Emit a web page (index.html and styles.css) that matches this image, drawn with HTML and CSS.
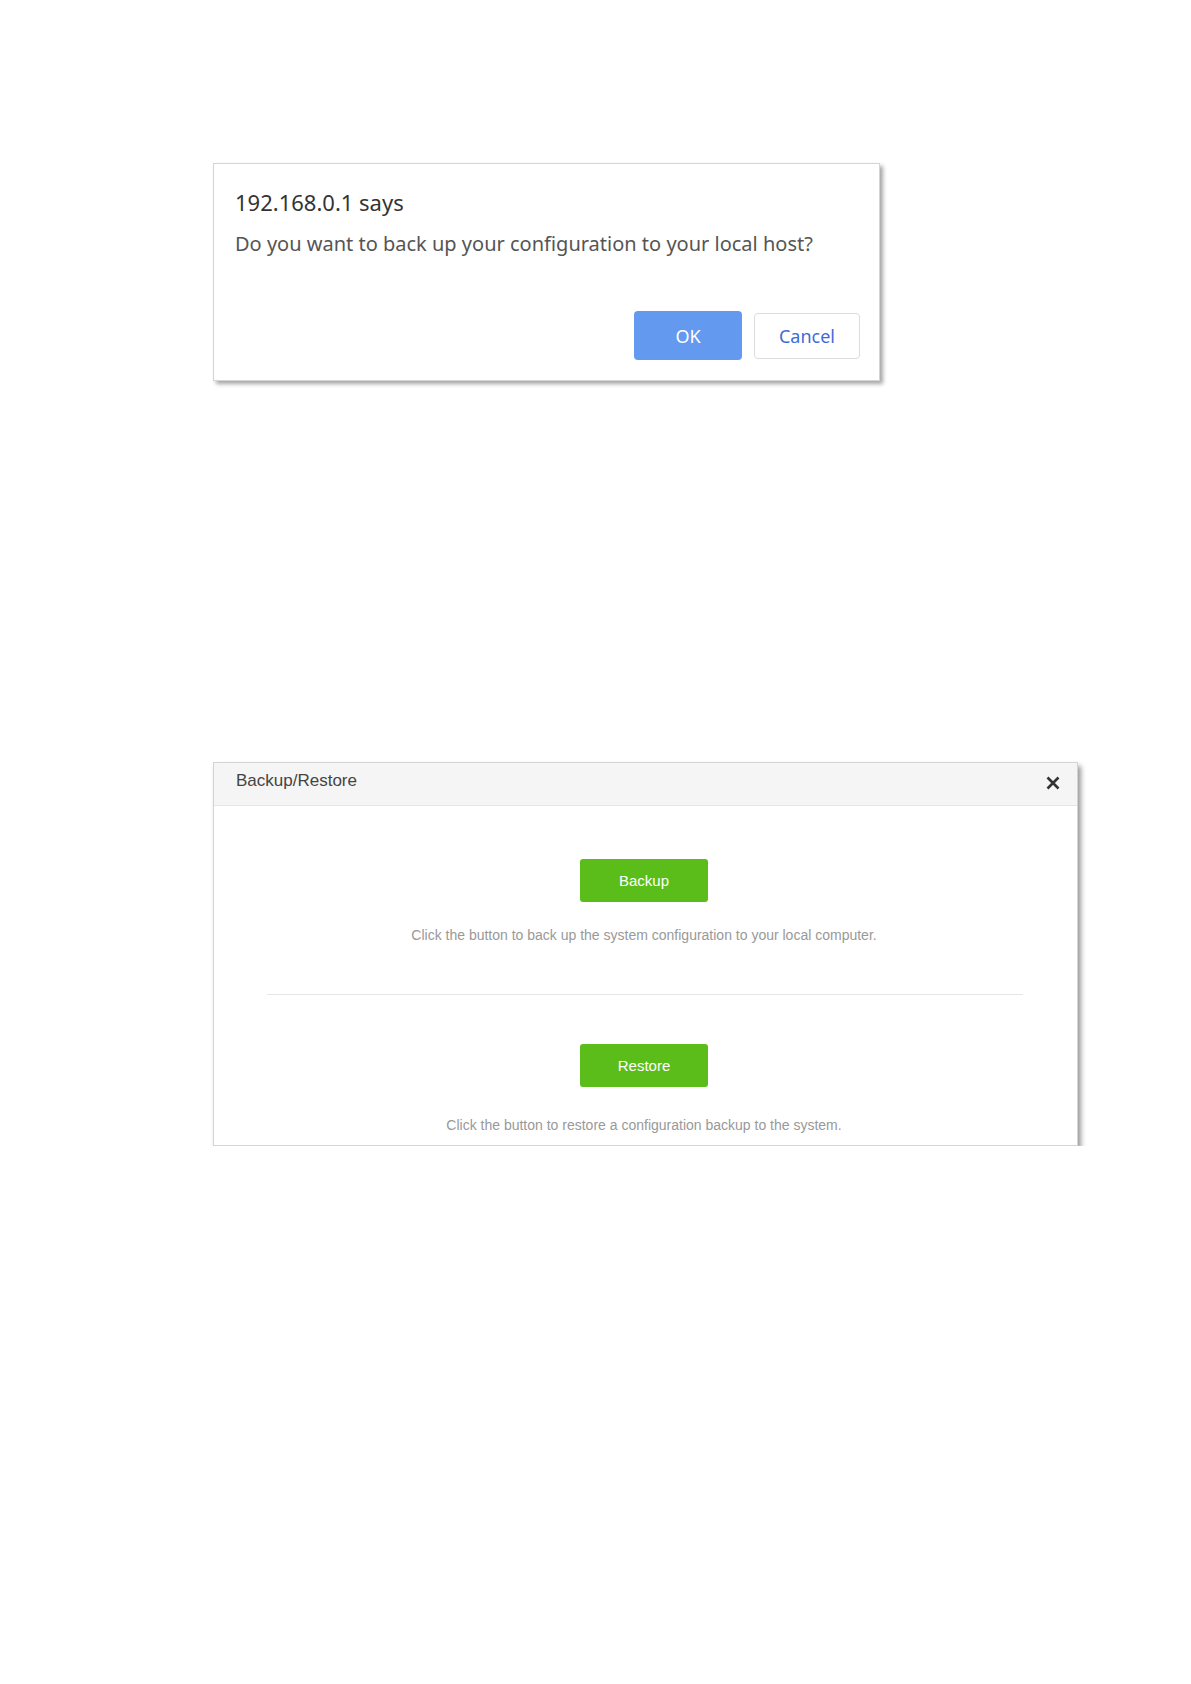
FILE: index.html
```html
<!DOCTYPE html>
<html lang="en">
<head>
    <meta charset="UTF-8">
    <meta name="viewport" content="width=device-width, initial-scale=1.0">
    <title>Backup/Restore</title>
    <link rel="stylesheet" href="styles.css">
</head>
<body>
    <div class="page">
        <div class="alert">
            <div class="alert-title">192.168.0.1 says</div>
            <div class="alert-message">Do you want to back up your configuration to your local host?</div>
            <div class="alert-buttons">
                <button class="btn-ok">OK</button>
                <button class="btn-cancel">Cancel</button>
            </div>
        </div>

        <div class="dialog">
            <div class="dialog-head">
                <span class="dialog-title">Backup/Restore</span>
                <svg class="dialog-close" width="14" height="14" viewBox="0 0 14 14">
                    <path d="M1.5 1.5 L12.5 12.5 M12.5 1.5 L1.5 12.5" stroke="#333" stroke-width="2.6" stroke-linecap="butt" fill="none"/>
                </svg>
            </div>
            <div class="dialog-body">
                <button class="btn-green">Backup</button>
                <p class="tip">Click the button to back up the system configuration to your local computer.</p>
                <hr class="divider">
                <button class="btn-green">Restore</button>
                <p class="tip tip-last">Click the button to restore a configuration backup to the system.</p>
            </div>
        </div>
    </div>
</body>
</html>
```

FILE: styles.css
```css
body {
    margin: 0;
    background-color: #fff;
    font-family: 'Liberation Sans', Arial, sans-serif;
}

.page {
    padding: 163px 0 0 213px;
    display: flex;
    flex-direction: column;
    align-items: flex-start;
}

.alert {
    width: 667px;
    height: 218px;
    box-sizing: border-box;
    border: 1px solid #d4d4d4;
    box-shadow: 3px 3px 4px rgba(0, 0, 0, 0.35);
    background-color: #fff;
    font-family: 'Noto Sans', 'Open Sans', sans-serif;
    padding: 0 19px 0 21px;
    display: flex;
    flex-direction: column;
}

.alert-title {
    margin-top: 23px;
    font-size: 22px;
    line-height: 30px;
    color: #333;
}

.alert-message {
    margin-top: 12px;
    font-size: 20px;
    line-height: 30px;
    color: #555;
}

.alert-buttons {
    margin-top: 52px;
    display: flex;
    justify-content: flex-end;
    align-items: center;
    gap: 12px;
}

.alert-buttons button {
    font-family: 'Noto Sans', 'Open Sans', sans-serif;
    font-size: 18px;
    border-radius: 4px;
    cursor: pointer;
}

.btn-ok {
    width: 108px;
    height: 49px;
    background-color: #6499f0;
    border: none;
    color: #fff;
}

.btn-cancel {
    width: 106px;
    height: 46px;
    background-color: #fff;
    border: 1px solid #dcdcdc;
    color: #3f6bd8;
}

.dialog {
    margin-top: 381px;
    width: 865px;
    box-sizing: border-box;
    border: 1px solid #d4d4d4;
    box-shadow: 3px 4px 5px rgba(0, 0, 0, 0.4);
    background-color: #fff;
}

.dialog-head {
    height: 42px;
    background-color: #f5f5f5;
    border-bottom: 1px solid #e6e6e6;
    display: flex;
    align-items: center;
    justify-content: space-between;
    padding: 0 17px 0 22px;
}

.dialog-title {
    font-size: 17px;
    color: #444;
    margin-top: -6px;
}

.dialog-close {
    margin-top: -3px;
}

.dialog-body {
    display: flex;
    flex-direction: column;
    align-items: center;
    padding: 53px 3px 0 0;
}

.btn-green {
    width: 128px;
    height: 43px;
    background-color: #5bbd19;
    border: none;
    border-radius: 3px;
    color: #fff;
    font-family: 'Liberation Sans', Arial, sans-serif;
    font-size: 15px;
    cursor: pointer;
}

.tip {
    margin: 23px 0 0;
    font-size: 14px;
    line-height: 20px;
    color: #999;
}

.divider {
    align-self: stretch;
    margin: 49px 51px 49px 53px;
    border: none;
    border-top: 1px solid #e6e6e6;
}

.tip-last {
    margin: 28px 0 10px;
}
```
